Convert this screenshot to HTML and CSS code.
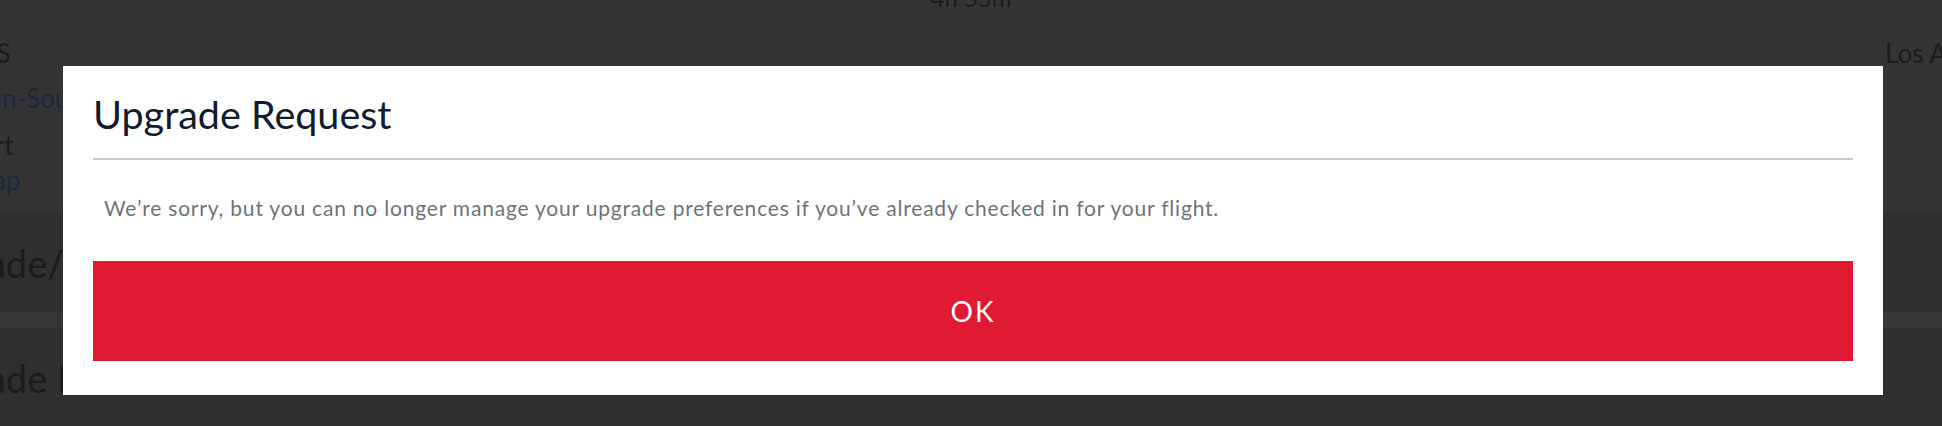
FILE: index.html
```html
<!DOCTYPE html>
<html lang="en">
<head>
    <meta charset="UTF-8">
    <meta name="viewport" content="width=device-width, initial-scale=1.0">
    <title>Upgrade Request</title>
    <link rel="stylesheet" href="styles.css">
</head>
<body>

    <!-- Trip page behind the dialog (dimmed) -->
    <div class="page">
        <div class="trip-head">
            <div class="trip-origin">
                <div class="city">BOS</div>
                <div class="airport-link line-two">Main-South Terminal</div>
                <div class="terminal">Start</div>
                <div class="airport-link line-four">Swap</div>
            </div>
            <div class="trip-duration">4h 55m</div>
            <div class="trip-dest">
                <div class="city">Los Angeles</div>
            </div>
        </div>

        <div class="section section-dark">
            <h2>Upgrade/Standby Lists</h2>
        </div>
        <div class="section-strip"></div>
        <div class="section section-dark">
            <h2>Upgrade Preferences</h2>
        </div>
    </div>

    <!-- Modal -->
    <div class="overlay">
        <div class="modal">
            <h1 class="modal-title">Upgrade Request</h1>
            <p class="modal-text">We’re sorry, but you can no longer manage your upgrade preferences if you’ve already checked in for your flight.</p>
            <button class="ok-btn">OK</button>
        </div>
    </div>

</body>
</html>
```

FILE: styles.css
```css
/* General Styles */
body {
    font-family: Lato, "Open Sans", sans-serif;
    margin: 0;
    padding: 0;
    background-color: #343434;
    overflow: hidden;
    height: 426px;
}

/* Page behind the overlay */
.page {
    color: #1c1c1c;
}

.trip-head {
    display: grid;
    grid-template-columns: 1fr auto 1fr;
    height: 213px;
}

.trip-origin {
    margin-left: -41px;
    padding-top: 35px;
    font-size: 26px;
    white-space: nowrap;
}

.trip-origin .city {
    line-height: 36px;
}

.airport-link {
    color: #1b2940;
}

.line-two {
    line-height: 54px;
}

.terminal {
    line-height: 40px;
}

.line-four {
    line-height: 30px;
}

.trip-duration {
    font-size: 24px;
    line-height: 24px;
    margin-top: -14px;
}

.trip-dest {
    justify-self: end;
    width: 57px;
    padding-top: 35px;
    white-space: nowrap;
    overflow: hidden;
}

.trip-dest .city {
    font-size: 26px;
    line-height: 36px;
}

.section {
    height: 99px;
    display: flex;
    align-items: center;
    overflow: hidden;
}

.section-dark {
    background-color: #2f2f2f;
}

.section-strip {
    height: 16px;
    background-color: #363636;
}

.section h2 {
    margin: 0 0 0 -95px;
    font-weight: normal;
    font-size: 38px;
    white-space: nowrap;
}

/* Modal */
.overlay {
    position: fixed;
    top: 0;
    left: 0;
    right: 0;
    bottom: 0;
}

.modal {
    position: absolute;
    top: 66px;
    left: 63px;
    width: 1760px;
    padding: 25px 30px 34px;
    background-color: #fff;
}

.modal-title {
    margin: 0;
    padding-bottom: 21px;
    border-bottom: 2px solid #c9c9c9;
    font-size: 39.5px;
    line-height: 46px;
    font-weight: normal;
    color: #0f1b2f;
}

.modal-text {
    margin: 35px 0 41px 11px;
    font-size: 21px;
    line-height: 25px;
    letter-spacing: 0.8px;
    color: #6e7379;
}

.ok-btn {
    display: block;
    width: 100%;
    height: 100px;
    border: none;
    background-color: #e01a33;
    color: #fff;
    font-family: Lato, "Open Sans", sans-serif;
    font-size: 28px;
    letter-spacing: 2px;
    cursor: pointer;
}
```
